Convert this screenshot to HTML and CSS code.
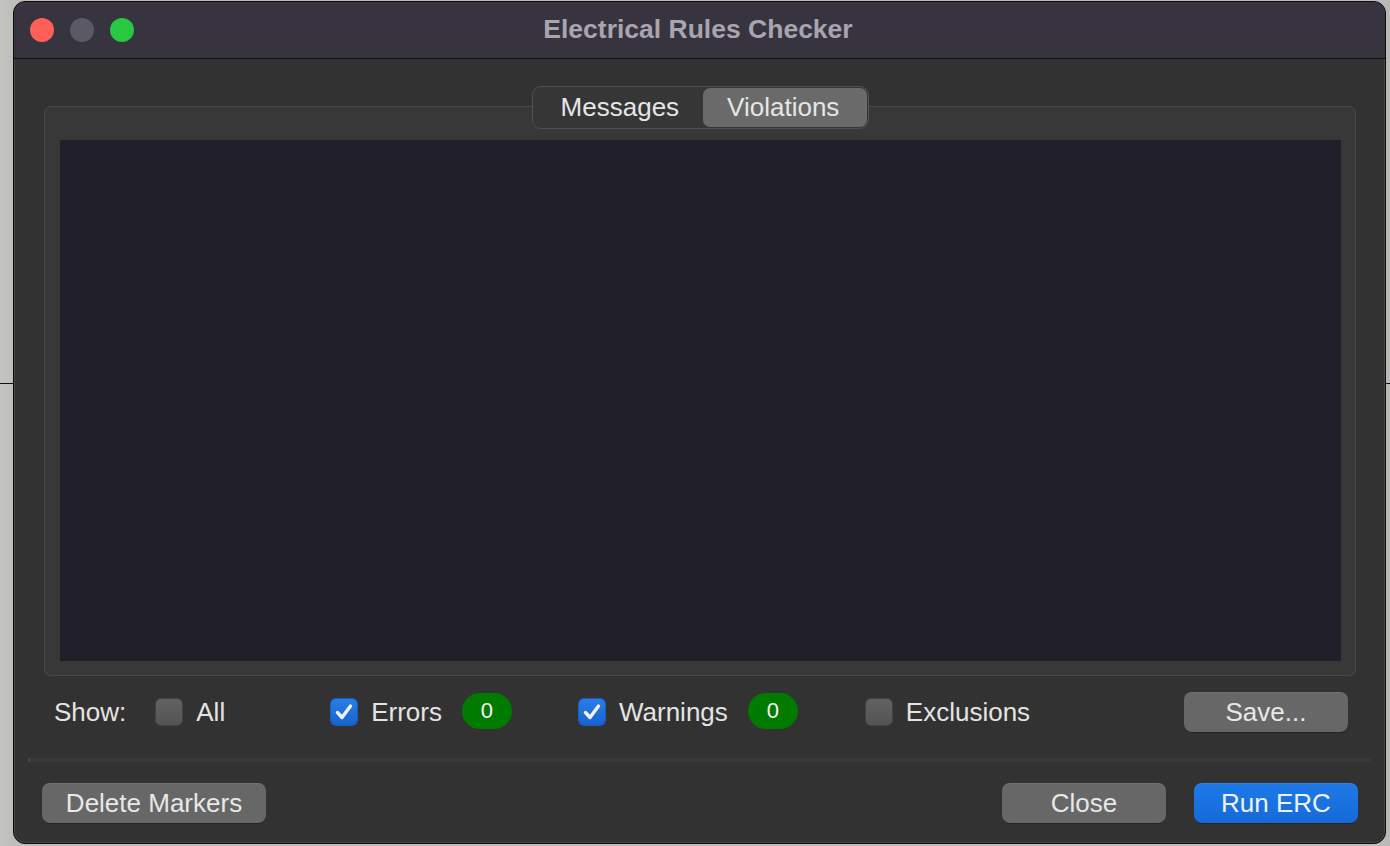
FILE: index.html
```html
<!DOCTYPE html>
<html>
<head>
<meta charset="utf-8">
<link rel="stylesheet" href="styles.css">
</head>
<body>
<div class="window">
  <div class="titlebar">
    <div class="lights">
      <span class="light red"></span>
      <span class="light gray"></span>
      <span class="light green"></span>
    </div>
    <div class="title">Electrical Rules Checker</div>
  </div>
  <div class="content">
    <div class="tabs">
      <div class="tab">Messages</div>
      <div class="tab active">Violations</div>
    </div>
    <div class="group">
      <div class="list"></div>
    </div>
    <div class="showrow">
      <span class="label show">Show:</span>
      <span class="cb"></span><span class="label all">All</span>
      <span class="cb checked"><svg viewBox="0 0 28 28" width="28" height="28"><path d="M7.5 14.5 L12 19.5 L20.5 8" fill="none" stroke="#eef2fa" stroke-width="3.4" stroke-linecap="round" stroke-linejoin="round"/></svg></span><span class="label">Errors</span>
      <span class="badge">0</span>
      <span class="cb checked warn"><svg viewBox="0 0 28 28" width="28" height="28"><path d="M7.5 14.5 L12 19.5 L20.5 8" fill="none" stroke="#eef2fa" stroke-width="3.4" stroke-linecap="round" stroke-linejoin="round"/></svg></span><span class="label">Warnings</span>
      <span class="badge">0</span>
      <span class="cb excl"></span><span class="label">Exclusions</span>
      <span class="spacer"></span>
      <button class="btn save">Save...</button>
    </div>
    <div class="sep"></div>
    <div class="bottom">
      <button class="btn delete">Delete Markers</button>
      <span class="spacer"></span>
      <button class="btn close">Close</button>
      <button class="btn primary">Run ERC</button>
    </div>
  </div>
</div>
</body>
</html>
```

FILE: styles.css
```css
html, body {
  margin: 0;
  padding: 0;
}
body {
  width: 1390px;
  height: 846px;
  overflow: hidden;
  background:
    linear-gradient(#111, #111) 0 383px / 100% 1px no-repeat,
    linear-gradient(90deg, #c4c4c0 0, #bdbdb9 14px, #bdbdb9 1376px, #b8b8b4 100%);
  font-family: "Liberation Sans", Arial, sans-serif;
  box-sizing: border-box;
  padding-top: 1px;
}
.window {
  margin-left: 13px;
  width: 1373px;
  height: 843px;
  box-sizing: border-box;
  border: 1px solid #0c0c0c;
  border-radius: 12px;
  background: #323232;
  overflow: hidden;
  display: flex;
  flex-direction: column;
  box-shadow: inset 0 0 0 1px rgba(255,255,255,0.10);
}
.titlebar {
  height: 57px;
  flex: none;
  box-sizing: border-box;
  background: #37343f;
  border-bottom: 1px solid #0e0e0e;
  display: flex;
  align-items: center;
  position: relative;
}
.lights {
  display: flex;
  gap: 16px;
  padding-left: 16px;
}
.light {
  width: 24px;
  height: 24px;
  border-radius: 50%;
  display: block;
}
.red { background: #fe5f57; }
.gray { background: #5b5964; }
.green { background: #28c840; }
.title {
  position: absolute;
  left: 0;
  right: 0;
  top: 12px;
  text-align: center;
  font-weight: bold;
  font-size: 26.5px;
  color: #a8a5b0;
  line-height: 30px;
  padding-right: 3px;
}
.content {
  flex: 1;
  display: flex;
  flex-direction: column;
  padding: 27px 29px 0 30px;
}
.tabs {
  align-self: center;
  margin-left: 1px;
  display: flex;
  height: 43px;
  box-sizing: border-box;
  border: 1px solid #505050;
  border-radius: 9px;
  background: #363636;
  position: relative;
  z-index: 1;
  margin-bottom: -23px;
  padding: 1px;
}
.tab {
  font-size: 26px;
  color: #e6e6e6;
  line-height: 39px;
  padding: 0 24px 0 27px;
  border-radius: 7px;
}
.tab.active {
  background: #6a6a6a;
  padding: 0 28px 0 24px;
}
.group {
  height: 570px;
  box-sizing: border-box;
  border: 1px solid #4a4a4a;
  border-radius: 7px;
  background: #383838;
  padding: 33px 14px 14px 15px;
  display: flex;
}
.list {
  flex: 1;
  background: #211f29;
}
.showrow {
  display: flex;
  align-items: center;
  height: 40px;
  margin-top: 16px;
}
.label {
  font-size: 26px;
  color: #e4e4e4;
  line-height: 30px;
}
.show {
  margin-left: 10px;
  margin-right: 29px;
}
.cb {
  width: 28px;
  height: 28px;
  box-sizing: border-box;
  border-radius: 6px;
  background: linear-gradient(#626262, #545454);
  border: 1px solid #444;
  margin-right: 13px;
  display: block;
  flex: none;
}
.cb.checked {
  background: linear-gradient(#2b7de8, #1862d0);
  border: 1px solid #1a5cbc;
  margin-left: 105px;
}
.cb.checked.warn {
  margin-left: 66px;
}
.cb.excl {
  margin-left: 67px;
}
.cb svg {
  display: block;
  margin: -1px;
}
.badge {
  width: 50px;
  height: 36px;
  border-radius: 18px;
  background: #007b00;
  color: #f4f4f4;
  font-size: 22px;
  line-height: 36px;
  text-align: center;
  margin-left: 20px;
  margin-top: -3px;
  flex: none;
}
.spacer {
  flex: 1;
}
.btn {
  font-family: "Liberation Sans", Arial, sans-serif;
  font-size: 26px;
  color: #e8e8e8;
  height: 40px;
  box-sizing: border-box;
  border: none;
  border-radius: 8px;
  background: #676767;
  box-shadow: 0 1px 0 rgba(0,0,0,0.25), inset 0 1px 0 rgba(255,255,255,0.08);
  padding: 0;
  line-height: 40px;
  flex: none;
}
.save {
  width: 164px;
  margin-right: 8px;
}
.sep {
  height: 4px;
  background: #393939;
  margin: 26px -15px 0 -16px;
  border-left: 2px solid #4a4a4a;
}
.bottom {
  display: flex;
  align-items: center;
  margin-top: 21px;
  margin-left: -2px;
}
.delete {
  width: 224px;
}
.close {
  width: 164px;
  margin-right: 28px;
}
.primary {
  width: 164px;
  margin-right: -2px;
  background: linear-gradient(#1d7ae8, #1669d8);
  color: #eef3fb;
}
```
